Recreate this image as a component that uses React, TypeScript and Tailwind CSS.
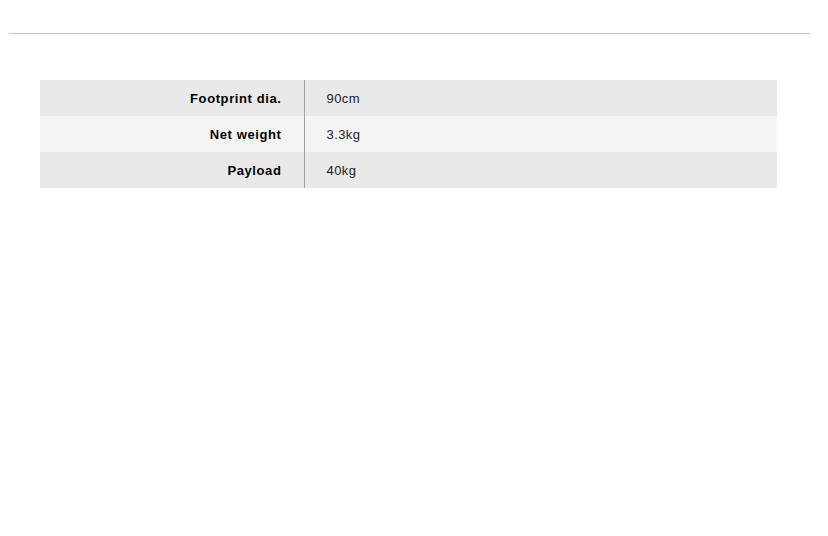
const rows = [
  { label: "Footprint dia.", value: "90cm" },
  { label: "Net weight", value: "3.3kg" },
  { label: "Payload", value: "40kg" },
];

export default function App() {
  return (
    <div className="w-[828px] h-[536px] bg-white font-['Liberation_Sans',Arial,sans-serif]">
      <div className="pt-[33px] px-[9px]">
        <div className="h-px bg-[#c2c2c2] w-[801px]" />
      </div>
      <table className="mt-[46px] ml-[40px] w-[737px] border-collapse">
        <tbody>
          {rows.map((r, i) => (
            <tr key={r.label} className={i % 2 === 0 ? "bg-[#e9e9e9]" : "bg-[#f4f4f4]"}>
              <td className="h-[36px] w-[264px] pr-[22px] pt-[2px] text-right text-[13px] font-bold tracking-[0.6px] text-black border-r border-[#a0a0a0]">
                {r.label}
              </td>
              <td className="h-[36px] pl-[22px] pt-[2px] text-[13px] tracking-[0.4px] text-[#222]">
                {r.value}
              </td>
            </tr>
          ))}
        </tbody>
      </table>
    </div>
  );
}
